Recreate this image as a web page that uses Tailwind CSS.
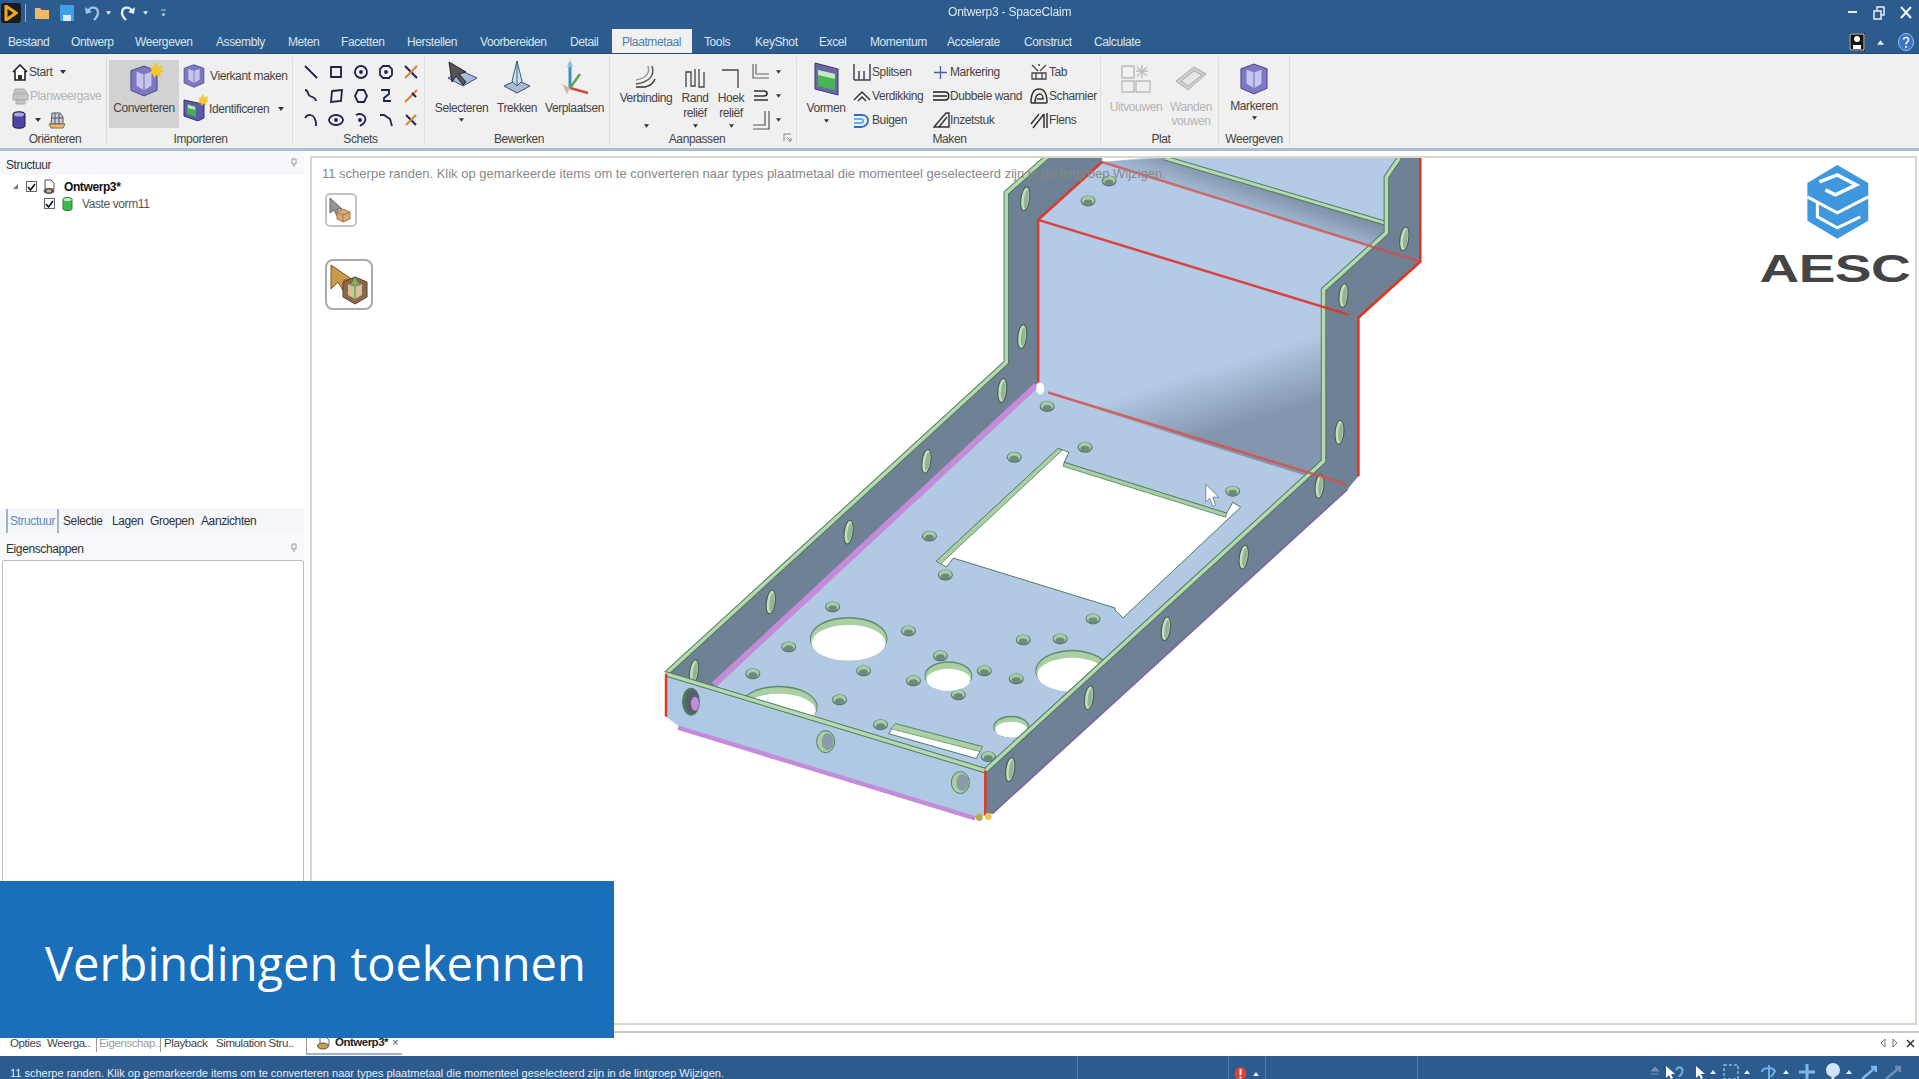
<!DOCTYPE html>
<html lang="nl">

<head>
    <meta charset="UTF-8">
    <title>Ontwerp3 - SpaceClaim</title>
    <script src="https://cdn.jsdelivr.net/npm/@tailwindcss/browser@4"></script>
</head>

<body class="bg-white">
    <svg class="hidden">
        <symbol id="caret" viewBox="0 0 6 4"><path d="M0 0h6L3 4z" fill="#333" /></symbol>
        <symbol id="caretw" viewBox="0 0 6 4"><path d="M0 4h6L3 0z" fill="#e8eef5" /></symbol>
        <symbol id="cube" viewBox="0 0 30 34">
            <path d="M15 1 29 6v21l-14 6-14-6V6z" fill="#7d78c4" stroke="#46427f" />
            <path d="M7 7v15l8 5 8-5V7l-8 3z" fill="#c4c6ec" />
            <path d="M15 10v17" stroke="#6c68ad" />
        </symbol>
    </svg>

    <div class="relative w-[1919px] h-[1079px] overflow-hidden flex flex-col font-['Liberation_Sans',Arial,sans-serif] text-[12px] tracking-[-0.4px] text-[#444] blur-[0.4px]">

        <!-- title bar -->
        <div class="h-[26px] bg-[#2b5c8d] flex items-center relative">
            <div class="w-[20px] h-[20px] ml-[1px] bg-[#1b1b1b] rounded-[3px] flex items-center justify-center">
                <svg width="14" height="16" viewBox="0 0 14 16"><path d="M2 1l10 7-10 7z" fill="none" stroke="#f2a81d" stroke-width="3" /></svg>
            </div>
            <div class="w-[1px] h-[18px] bg-[#8fb0cf] ml-[4px]"></div>
            <svg class="ml-[8px]" width="16" height="14" viewBox="0 0 16 14"><path d="M1 2h5l2 2h7v9H1z" fill="#f0b860" /></svg>
            <svg class="ml-[10px]" width="14" height="16" viewBox="0 0 14 16"><path d="M0 0h14v16H0z" fill="#3fa0e8" /><path d="M3 10h8v6H3z" fill="#dceaf6" /></svg>
            <svg class="ml-[11px]" width="15" height="16" viewBox="0 0 15 16"><path d="M3 7C4 1 13 1 13 8c0 3-2 5-4 7" fill="none" stroke="#9cc4ea" stroke-width="2.4" /><path d="M0 2l1 7 6-2z" fill="#9cc4ea" /></svg>
            <svg class="ml-[6px]" width="5" height="4"><use href="#caretw" transform="rotate(180 2.5 2)" /></svg>
            <svg class="ml-[9px]" width="15" height="16" viewBox="0 0 15 16"><path d="M12 7C11 1 2 1 2 8c0 3 2 5 4 7" fill="none" stroke="#e6eef6" stroke-width="2.4" /><path d="M15 2l-1 7-6-2z" fill="#e6eef6" /></svg>
            <svg class="ml-[8px]" width="5" height="4"><use href="#caretw" transform="rotate(180 2.5 2)" /></svg>
            <svg class="ml-[13px]" width="6" height="8"><path d="M0 1h5M1 5h3L2.500 7z" stroke="#b9cde0" fill="#b9cde0" /></svg>
            <span class="absolute left-[948px] top-[5px] text-[#dfe8f1] leading-[14px] tracking-[-0.2px]">Ontwerp3 - SpaceClaim</span>
            <div class="absolute left-[1847px] top-[5px] flex items-center gap-[15px]">
                <svg width="11" height="16" viewBox="0 0 11 16"><path d="M1 7h9" stroke="#e8eef5" stroke-width="2" /></svg>
                <svg width="12" height="16" viewBox="0 0 12 16"><path d="M1 6h7v8H1zM4 6V2h7v8H8" fill="none" stroke="#e8eef5" stroke-width="1.500" /></svg>
                <svg width="12" height="16" viewBox="0 0 12 16"><path d="M1 2l10 11M11 2 1 13" stroke="#f4f7fa" stroke-width="2" /></svg>
            </div>
        </div>

        <!-- menu tabs -->
        <div class="h-[28px] bg-[#2b5c8d] flex items-end pl-[8px] text-[#dbe5ef] relative border-b border-[#214d7a]">
            <span class="w-[63px] h-[24px] leading-[26px]">Bestand</span>
            <span class="w-[64px] h-[24px] leading-[26px]">Ontwerp</span>
            <span class="w-[81px] h-[24px] leading-[26px]">Weergeven</span>
            <span class="w-[72px] h-[24px] leading-[26px]">Assembly</span>
            <span class="w-[53px] h-[24px] leading-[26px]">Meten</span>
            <span class="w-[66px] h-[24px] leading-[26px]">Facetten</span>
            <span class="w-[73px] h-[24px] leading-[26px]">Herstellen</span>
            <span class="w-[90px] h-[24px] leading-[26px]">Voorbereiden</span>
            <span class="w-[42px] h-[24px] leading-[26px]">Detail</span>
            <span class="w-[80px] h-[24px] leading-[26px] pl-[10px] bg-[#f0f0f0] text-[#4f7fae]">Plaatmetaal</span>
            <span class="ml-[12px] w-[51px] h-[24px] leading-[26px]">Tools</span>
            <span class="w-[64px] h-[24px] leading-[26px]">KeyShot</span>
            <span class="w-[51px] h-[24px] leading-[26px]">Excel</span>
            <span class="w-[77px] h-[24px] leading-[26px]">Momentum</span>
            <span class="w-[77px] h-[24px] leading-[26px]">Accelerate</span>
            <span class="w-[70px] h-[24px] leading-[26px]">Construct</span>
            <span class="w-[70px] h-[24px] leading-[26px]">Calculate</span>
            <div class="absolute left-[1849px] top-[7px] flex items-center">
                <svg width="16" height="18" viewBox="0 0 16 18"><path d="M0 0h16v18H0z" fill="#111" /><path d="M1 1h14v16H1z" fill="none" stroke="#cfd8e2" /><circle cx="8" cy="6" r="3" fill="#fff" /><path d="M4 16v-4h8v4z" fill="#fff" /></svg>
                <svg class="ml-[12px]" width="7" height="5"><use href="#caretw" /></svg>
                <svg class="ml-[14px]" width="16" height="18" viewBox="0 0 16 18"><ellipse cx="8" cy="9" rx="7.500" ry="8.500" fill="#3d74c8" stroke="#9cc0ee" /><path d="M5.500 6.500C6 3.500 11 4 10.500 7c-.3 2-2.500 2-2.500 4.500M8 13v2" fill="none" stroke="#fff" stroke-width="1.500" /></svg>
            </div>
        </div>

        <!-- ribbon -->
        <div class="h-[94px] bg-[#f0f0f0] py-[3px] flex whitespace-nowrap">
            <!-- Orienteren -->
            <div class="w-[107px] flex flex-col pt-[3px] border-r border-[#dcdcdc]">
                <div class="h-[72px] pl-[12px]">
                    <div class="h-[24px] flex items-center">
                        <svg width="16" height="17" viewBox="0 0 16 17"><path d="M1 8 8 1l7 7M3 7v9h10V7" fill="#fff" stroke="#222" stroke-width="1.600" /><path d="M6 16v-5h4v5z" fill="#333" /></svg>
                        <span class="ml-[1px]">Start</span>
                        <svg class="ml-[8px]" width="6" height="4"><use href="#caret" /></svg>
                    </div>
                    <div class="h-[24px] flex items-center text-[#b4b4b4]">
                        <svg width="17" height="17" viewBox="0 0 17 17"><path d="M3 1h9l3 4H2zM1 6h15v6H1zM4 12h9v4H4z" fill="#c4c4c4" stroke="#aaa" /></svg>
                        <span class="ml-[1px]">Planweergave</span>
                    </div>
                    <div class="h-[24px] flex items-center">
                        <svg width="14" height="18" viewBox="0 0 14 18"><path d="M1 3c0-3 12-3 12 0v12c0 3-12 3-12 0z" fill="#4a45a8" stroke="#222" /><ellipse cx="7" cy="3.500" rx="5" ry="2" fill="#aaa8e6" /></svg>
                        <svg class="ml-[9px]" width="6" height="4"><use href="#caret" /></svg>
                        <svg class="ml-[7px]" width="18" height="18" viewBox="0 0 18 18"><path d="M4 2h8l3 4v7H3z" fill="#c9cde0" stroke="#555" /><path d="M1 13h16l-2 4H3z" fill="#e3b978" stroke="#8a6a3c" /><path d="M7 2v11M11 3v10M3 7h12" stroke="#555" /></svg>
                    </div>
                </div>
                <div class="h-[12px] leading-[14px] text-center pl-[4px]">Oriënteren</div>
            </div>
            <!-- Importeren -->
            <div class="w-[186px] flex flex-col pt-[3px] border-r border-[#dcdcdc]">
                <div class="h-[72px] flex pl-[2px]">
                    <div class="w-[70px] h-[68px] bg-[#d2d2d2] flex flex-col items-center pt-[4px]">
                        <div class="relative h-[34px]">
                            <svg width="28" height="34"><use href="#cube" /></svg>
                            <svg class="absolute top-[-2px] right-[-6px]" width="16" height="16" viewBox="0 0 16 16"><path d="M8 0l2 5 5-2-2 5 3 1-4 2 1 4-4-2-3 3-1-4-4 0 3-4-3-3 4 0z" fill="#f5c52e" /></svg>
                        </div>
                        <span class="mt-[3px] leading-[14px]">Converteren</span>
                    </div>
                    <div class="ml-[4px] flex flex-col">
                        <div class="h-[32px] flex items-center">
                            <svg width="22" height="24"><use href="#cube" /></svg>
                            <span class="ml-[5px]">Vierkant maken</span>
                        </div>
                        <div class="h-[34px] flex items-center">
                            <div class="relative w-[22px] h-[24px]">
                                <svg width="22" height="24" viewBox="0 0 22 24"><path d="M1 3l14 3 6-2v17l-6 3-14-5z" fill="#5d5aa8" stroke="#33306b" /><path d="M4 7l9 2v11l-9-3z" fill="#45b04e" /><path d="M5 8l7 2v3l-7-2z" fill="#bfe6b8" /></svg>
                                <svg class="absolute top-[-3px] right-[-4px]" width="12" height="12" viewBox="0 0 16 16"><path d="M8 0l2 5 5-2-2 5 3 1-4 2 1 4-4-2-3 3-1-4-4 0 3-4-3-3 4 0z" fill="#f5c52e" /></svg>
                            </div>
                            <span class="ml-[4px]">Identificeren</span>
                            <svg class="ml-[9px]" width="6" height="4"><use href="#caret" /></svg>
                        </div>
                    </div>
                </div>
                <div class="h-[12px] leading-[14px] text-center pl-[2px]">Importeren</div>
            </div>
            <!-- Schets -->
            <div class="w-[132px] flex flex-col pt-[3px] border-r border-[#dcdcdc]">
                <div class="h-[72px] pl-[5px] grid grid-cols-[repeat(5,25px)] grid-rows-[repeat(3,24px)] place-items-center">
                    <svg width="16" height="16" viewBox="0 0 16 16" fill="none" stroke="#1d2350" stroke-width="1.800"><path d="M2 2l12 12" /></svg>
                    <svg width="16" height="16" viewBox="0 0 16 16" fill="none" stroke="#1d2350" stroke-width="1.800"><path d="M3 3h10v10H3z" /></svg>
                    <svg width="16" height="16" viewBox="0 0 16 16" fill="none" stroke="#1d2350" stroke-width="1.800"><circle cx="8" cy="8" r="6" /><circle cx="8" cy="8" r="1" /></svg>
                    <svg width="16" height="16" viewBox="0 0 16 16" fill="none" stroke="#1d2350" stroke-width="1.800"><path d="M5 2h6l3 3v6l-3 3H5l-3-3V5z" /><circle cx="8" cy="8" r="1" /></svg>
                    <svg width="16" height="16" viewBox="0 0 16 16" fill="none" stroke-width="2"><path d="M2 2l12 12" stroke="#1d2350" /><path d="M14 2 2 14" stroke="#d9822b" /></svg>
                    <svg width="16" height="16" viewBox="0 0 16 16" fill="none" stroke="#1d2350" stroke-width="1.800"><path d="M2 2c4 0 2 5 5 6s6 2 6 5" /></svg>
                    <svg width="16" height="16" viewBox="0 0 16 16" fill="none" stroke="#1d2350" stroke-width="1.800"><path d="M4 3l10-1-1 11-10 1z" /></svg>
                    <svg width="16" height="16" viewBox="0 0 16 16" fill="none" stroke="#1d2350" stroke-width="1.800"><path d="M5 2h6l3 6-3 6H5L2 8z" /></svg>
                    <svg width="16" height="16" viewBox="0 0 16 16" fill="none" stroke="#1d2350" stroke-width="1.800"><path d="M3 2h8v4L6 10v3h7" /></svg>
                    <svg width="16" height="16" viewBox="0 0 16 16" fill="none" stroke-width="2"><path d="M14 2 2 14" stroke="#d9822b" /><path d="M9 5l4 4" stroke="#1d2350" /></svg>
                    <svg width="16" height="16" viewBox="0 0 16 16" fill="none" stroke="#1d2350" stroke-width="1.800"><path d="M2 6c3-5 10-4 11 5v3" /></svg>
                    <svg width="16" height="16" viewBox="0 0 16 16" fill="none" stroke="#1d2350" stroke-width="1.800"><ellipse cx="8" cy="8" rx="7" ry="5" /><circle cx="8" cy="8" r="1" /></svg>
                    <svg width="16" height="16" viewBox="0 0 16 16" fill="none" stroke="#1d2350" stroke-width="1.800"><path d="M3 3c6-3 12 2 8 8l-4 3" /><circle cx="7" cy="8" r="1" /></svg>
                    <svg width="16" height="16" viewBox="0 0 16 16" fill="none" stroke="#1d2350" stroke-width="1.800"><path d="M2 3h4l6 4 2 7" /></svg>
                    <svg width="16" height="16" viewBox="0 0 16 16" fill="none" stroke-width="2"><path d="M3 3l10 10" stroke="#1d2350" /><path d="M13 3 3 13" stroke="#d9822b" /></svg>
                </div>
                <div class="h-[12px] leading-[14px] text-center pl-[4px]">Schets</div>
            </div>
            <!-- Bewerken -->
            <div class="w-[185px] flex flex-col pt-[3px] border-r border-[#dcdcdc]">
                <div class="h-[72px] flex pl-[9px]">
                    <div class="w-[55px] flex flex-col items-center">
                        <svg width="32" height="36" viewBox="0 0 32 36"><path d="M2 18l14-7 15 7-14 8z" fill="#a8bcd8" stroke="#33507a" /><path d="M3 2l3 20 4-6 7 9 3-3-7-8 7-2z" fill="#555" stroke="#222" /></svg>
                        <span class="mt-[5px] leading-[14px]">Selecteren</span>
                        <svg class="mt-[3px]" width="5" height="4"><use href="#caret" /></svg>
                    </div>
                    <div class="w-[56px] flex flex-col items-center">
                        <svg width="28" height="36" viewBox="0 0 28 36"><path d="M1 26l13-6 13 6-13 7z" fill="#a8bcd8" stroke="#33507a" /><path d="M14 1l5 20-5 5-5-5z" fill="#cfe2ef" stroke="#33607a" /><path d="M14 1v25" stroke="#33607a" /></svg>
                        <span class="mt-[5px] leading-[14px]">Trekken</span>
                    </div>
                    <div class="w-[59px] flex flex-col items-center">
                        <svg width="30" height="36" viewBox="0 0 30 36" fill="none"><path d="M10 28 10 3" stroke="#3a93b8" stroke-width="3" /><path d="M10 28 28 33" stroke="#d4453a" stroke-width="2.500" /><path d="M10 28 20 14" stroke="#5aa84e" stroke-width="2.500" /><path d="M10 0l3 7H7z" fill="#8fc4d8" /><path d="M2 24l8 4-3 6z" fill="#d8b0a0" /></svg>
                        <span class="mt-[5px] leading-[14px]">Verplaatsen</span>
                    </div>
                </div>
                <div class="h-[12px] leading-[14px] text-center pl-[4px]">Bewerken</div>
            </div>
            <!-- Aanpassen -->
            <div class="w-[187px] relative flex flex-col pt-[3px] border-r border-[#dcdcdc]">
                <div class="h-[72px] flex pl-[8px]">
                    <div class="w-[56px] flex flex-col items-center">
                        <svg class="mt-[5px]" width="22" height="24" viewBox="0 0 22 24" fill="none" stroke="#555" stroke-width="1.500"><path d="M17 1c3 9-2 16-16 18" /><path d="M13 1c2 7-1 12-12 14" stroke="#999" /><path d="M1 22h9c5-1 8-3 10-8" stroke="#333" /></svg>
                        <span class="mt-[2px] leading-[15px]">Verbinding</span>
                        <svg class="mt-[18px]" width="5" height="4"><use href="#caret" /></svg>
                    </div>
                    <div class="w-[42px] flex flex-col items-center">
                        <svg class="mt-[7px]" width="20" height="22" viewBox="0 0 20 22" fill="none" stroke="#444" stroke-width="1.300"><path d="M1 20V5h5v14h4V2h0M14 2v18h5V5" /></svg>
                        <span class="mt-[2px] leading-[15px] text-center">Rand<br>reliëf</span>
                        <svg class="mt-[3px]" width="5" height="4"><use href="#caret" /></svg>
                    </div>
                    <div class="w-[30px] flex flex-col items-center">
                        <svg class="mt-[7px]" width="20" height="22" viewBox="0 0 20 22" fill="none" stroke="#444" stroke-width="1.300"><path d="M1 3h16v18" /></svg>
                        <span class="mt-[2px] leading-[15px] text-center">Hoek<br>reliëf</span>
                        <svg class="mt-[3px]" width="5" height="4"><use href="#caret" /></svg>
                    </div>
                    <div class="ml-[6px] flex flex-col">
                        <div class="h-[24px] flex items-center">
                            <svg width="18" height="18" viewBox="0 0 18 18" fill="none" stroke="#666" stroke-width="1.200"><path d="M1 1v14h16M4 1v10h13" /></svg>
                            <svg class="ml-[6px]" width="5" height="4"><use href="#caret" /></svg>
                        </div>
                        <div class="h-[24px] flex items-center">
                            <svg width="18" height="14" viewBox="0 0 18 14" fill="none" stroke="#333" stroke-width="1.600"><path d="M2 2h10c4 0 4 5 0 5H2M2 11h14" /></svg>
                            <svg class="ml-[6px]" width="5" height="4"><use href="#caret" /></svg>
                        </div>
                        <div class="h-[24px] flex items-center">
                            <svg width="18" height="20" viewBox="0 0 18 20" fill="none" stroke="#555" stroke-width="1.200"><path d="M1 15h12V1M1 19h16V1" /></svg>
                            <svg class="ml-[6px]" width="5" height="4"><use href="#caret" /></svg>
                        </div>
                    </div>
                </div>
                <div class="h-[12px] leading-[14px] text-center pr-[12px]">Aanpassen</div>
                <svg class="absolute left-[173px] top-[76px]" width="9" height="9" viewBox="0 0 9 9" fill="none" stroke="#888"><path d="M1 1h7M1 1v7M4 4l4 4M8 5v3H5" /></svg>
            </div>
            <!-- Maken -->
            <div class="w-[304px] flex flex-col pt-[3px] border-r border-[#dcdcdc]">
                <div class="h-[72px] flex pl-[7px]">
                    <div class="w-[44px] flex flex-col items-center">
                        <svg class="mt-[2px]" width="25" height="34" viewBox="0 0 25 34"><path d="M1 1l23 6v26L1 27z" fill="#6b68a8" stroke="#3a3870" /><path d="M4 8l17 4v16L4 24z" fill="#49b455" /><path d="M4 8l17 4v5L4 13z" fill="#c4eabf" /></svg>
                        <span class="mt-[5px] leading-[14px]">Vormen</span>
                        <svg class="mt-[4px]" width="5" height="4"><use href="#caret" /></svg>
                    </div>
                    <div class="ml-[5px] w-[80px] flex flex-col">
                        <div class="h-[24px] flex items-center">
                            <svg width="18" height="18" viewBox="0 0 18 18" fill="none" stroke="#445" stroke-width="1.500"><path d="M1 17V1M1 17h16V1M6 17V8M11 17V8" /></svg>
                            <span class="ml-[1px]">Splitsen</span>
                        </div>
                        <div class="h-[24px] flex items-center">
                            <svg width="18" height="12" viewBox="0 0 18 12" fill="none" stroke="#334" stroke-width="1.500"><path d="M1 10 9 2l8 8M5 11l4-4 4 4" /></svg>
                            <span class="ml-[1px]">Verdikking</span>
                        </div>
                        <div class="h-[24px] flex items-center">
                            <svg width="18" height="18" viewBox="0 0 18 18" fill="none" stroke-width="1.800"><path d="M1 4h8c8 0 8 10 0 12H1" stroke="#2f6fbf" /><path d="M1 8h7c3 0 3 4 0 4H1" stroke="#6ab0e6" /></svg>
                            <span class="ml-[1px]">Buigen</span>
                        </div>
                    </div>
                    <div class="w-[97px] flex flex-col">
                        <div class="h-[24px] flex items-center">
                            <svg class="ml-[1px]" width="13" height="13" viewBox="0 0 13 13" stroke="#4a5fa8" stroke-width="1.300"><path d="M6.500 0v13M0 6.500h13" /></svg>
                            <span class="ml-[3px]">Markering</span>
                        </div>
                        <div class="h-[24px] flex items-center">
                            <svg width="17" height="10" viewBox="0 0 17 10" fill="none" stroke="#222" stroke-width="1.500"><path d="M0 1h12c5 0 5 8 0 8H0M0 5h14" /></svg>
                            <span class="ml-[0px]">Dubbele wand</span>
                        </div>
                        <div class="h-[24px] flex items-center">
                            <svg width="17" height="18" viewBox="0 0 17 18" fill="none" stroke="#333" stroke-width="1.400"><path d="M1 16 13 2h3v14zM6 16l8-10" /></svg>
                            <span class="ml-[0px]">Inzetstuk</span>
                        </div>
                    </div>
                    <div class="flex flex-col">
                        <div class="h-[24px] flex items-center">
                            <svg width="18" height="18" viewBox="0 0 18 18" fill="none" stroke="#444" stroke-width="1.300"><path d="M2 2l6 6M16 2l-6 6M8 2h2M2 10h14v6H2zM6 10v6M12 10v6" /></svg>
                            <span class="ml-[1px]">Tab</span>
                        </div>
                        <div class="h-[24px] flex items-center">
                            <svg width="18" height="16" viewBox="0 0 18 16" fill="none" stroke="#333" stroke-width="1.500"><path d="M1 15c0-9 3-14 8-14s8 5 8 14M5 15c0-6 2-9 5-9 2 0 3 3 3 5H7M1 15h16" /></svg>
                            <span class="ml-[1px]">Scharnier</span>
                        </div>
                        <div class="h-[24px] flex items-center">
                            <svg width="18" height="18" viewBox="0 0 18 18" fill="none" stroke="#333" stroke-width="1.500"><path d="M1 13 9 3M3 17 14 3M14 3v14M17 2v15" /></svg>
                            <span class="ml-[1px]">Flens</span>
                        </div>
                    </div>
                </div>
                <div class="h-[12px] leading-[14px] text-center pl-[2px]">Maken</div>
            </div>
            <!-- Plat -->
            <div class="w-[118px] flex flex-col pt-[3px] border-r border-[#dcdcdc]">
                <div class="h-[72px] flex pl-[7px] text-[#b4b4b4]">
                    <div class="w-[56px] flex flex-col items-center">
                        <svg class="mt-[4px]" width="32" height="30" viewBox="0 0 32 30" fill="none" stroke="#bbb" stroke-width="1.400"><path d="M2 2h12v12H2zM2 17h12v11H2zM16 17h14v11H16z" /><path d="M22 1v13M17 3l10 9M27 3 17 12M16 7h12" /></svg>
                        <span class="mt-[6px] leading-[14px]">Uitvouwen</span>
                    </div>
                    <div class="w-[54px] flex flex-col items-center">
                        <svg class="mt-[4px]" width="32" height="30" viewBox="0 0 32 30"><path d="M1 17 19 3l12 7-18 16z" fill="#d0d0d0" stroke="#aaa" /><path d="M6 17 19 7l8 4-14 11z" fill="#e6e6e6" stroke="#aaa" /></svg>
                        <span class="mt-[6px] leading-[14px] text-center">Wanden<br>vouwen</span>
                    </div>
                </div>
                <div class="h-[12px] leading-[14px] text-center pl-[3px]">Plat</div>
            </div>
            <!-- Weergeven -->
            <div class="w-[71px] flex flex-col pt-[3px] border-r border-[#dcdcdc]">
                <div class="h-[72px] flex flex-col items-center">
                    <svg class="mt-[2px]" width="28" height="34"><use href="#cube" /></svg>
                    <span class="mt-[3px] leading-[14px]">Markeren</span>
                    <svg class="mt-[3px]" width="5" height="4"><use href="#caret" /></svg>
                </div>
                <div class="h-[12px] leading-[14px] text-center">Weergeven</div>
            </div>
        </div>
        <div class="h-[3px] bg-[#aebfd1]"></div>

        <!-- main -->
        <div class="h-[880px] flex bg-white">
            <!-- left panels -->
            <div class="w-[310px] flex flex-col">
                <div class="h-[357px]">
                    <div class="h-[24px] mr-[6px] pl-[6px] bg-[#f5f7fb] relative flex items-center text-[#333] pt-[3px]">
                        Structuur
                        <svg class="absolute right-[7px] top-[7px]" width="6" height="9" viewBox="0 0 6 9" fill="none" stroke="#999"><path d="M1 1h4v5H1zM3 6v3" /></svg>
                    </div>
                    <div class="mt-[3px] flex items-center h-[17px] pl-[12px]">
                        <svg width="7" height="7" viewBox="0 0 7 7"><path d="M6 1v5H1z" fill="#777" /></svg>
                        <div class="ml-[7px] w-[11px] h-[11px] border border-[#666] bg-white flex items-center justify-center">
                            <svg width="9" height="8" viewBox="0 0 9 8" fill="none" stroke="#111" stroke-width="1.600"><path d="M1 4l2.500 3L8 1" /></svg>
                        </div>
                        <svg class="ml-[6px]" width="13" height="16" viewBox="0 0 13 16"><path d="M2 1h6l3 3v6H2z" fill="#fff" stroke="#555" /><ellipse cx="6" cy="12" rx="5.500" ry="3" fill="#555" /><ellipse cx="6" cy="12" rx="2.500" ry="1.500" fill="#d8b87c" /></svg>
                        <span class="ml-[8px] font-bold text-[#111]">Ontwerp3*</span>
                    </div>
                    <div class="flex items-center h-[17px] pl-[44px]">
                        <div class="w-[11px] h-[11px] border border-[#666] bg-white flex items-center justify-center">
                            <svg width="9" height="8" viewBox="0 0 9 8" fill="none" stroke="#111" stroke-width="1.600"><path d="M1 4l2.500 3L8 1" /></svg>
                        </div>
                        <svg class="ml-[7px]" width="11" height="14" viewBox="0 0 11 14"><path d="M1 2c0-2 9-2 9 0v10c0 2-9 2-9 0z" fill="#3db84e" stroke="#2b7d38" /><ellipse cx="5.500" cy="2.500" rx="4" ry="1.500" fill="#bdeec2" /></svg>
                        <span class="ml-[9px] text-[#555]">Vaste vorm11</span>
                    </div>
                </div>
                <div class="h-[26px] mr-[6px] pl-[6px] bg-[#f4f6fa] flex items-center text-[#333]">
                    <span class="w-[53px] h-[24px] leading-[24px] text-center text-[#5d8cbc] border-x-2 border-[#9db4cb] mr-[4px]">Structuur</span>
                    <span class="w-[49px]">Selectie</span>
                    <span class="w-[38px]">Lagen</span>
                    <span class="w-[51px]">Groepen</span>
                    <span>Aanzichten</span>
                </div>
                <div class="h-[26px] mr-[6px] pl-[6px] bg-[#f8f9fc] relative flex items-end pb-[2px] text-[#333]">
                    Eigenschappen
                    <svg class="absolute right-[7px] top-[9px]" width="6" height="9" viewBox="0 0 6 9" fill="none" stroke="#999"><path d="M1 1h4v5H1zM3 6v3" /></svg>
                </div>
                <div class="flex-1 ml-[2px] mr-[6px] border border-[#bdbdbd] rounded-t-[2px]"></div>
            </div>

            <!-- viewport -->
            <div class="relative flex-1 mt-[5px] mb-[6px] mr-[2px] border-2 border-[#d8d8cc] overflow-hidden">
                <svg class="absolute inset-0 w-full h-full" viewBox="312 158 1603 867">
                    <defs>
                        <linearGradient id="backwall" gradientUnits="userSpaceOnUse" x1="1178" y1="378" x2="1197" y2="439">
                            <stop offset="0" stop-color="#b3cbe6" />
                            <stop offset="1" stop-color="#8396ad" />
                        </linearGradient>
                        <linearGradient id="flange" gradientUnits="userSpaceOnUse" x1="1275" y1="190" x2="1262" y2="228">
                            <stop offset="0" stop-color="#7f91a8" />
                            <stop offset="1" stop-color="#b3cbe6" />
                        </linearGradient>
                        <g id="h"><ellipse rx="7.500" ry="5.500" fill="#547a66" /><ellipse cy="-0.500" rx="6.500" ry="4.500" fill="#a7cfa4" /><ellipse cy="1.500" rx="4.500" ry="3" fill="#6d8a80" /></g>
                        <g id="w"><ellipse rx="5" ry="12.500" fill="#40604f" /><ellipse rx="3.800" ry="11.500" fill="#c3e0bb" /><ellipse cx="1" rx="2.200" ry="9.500" fill="#93b497" /></g>
                    </defs>

                    <!-- floor and back -->
                    <path d="M1038 383 1349 488 985 775 665 675z" fill="#b1c9e3" />
                    <path d="M1038 220 1349 315V490L1038 392z" fill="url(#backwall)" />
                    <path d="M1102 162 1165 156 1400 156 1421 262 1349 315 1038 220z" fill="#b3cbe6" />
                    <path d="M1165 158 1385 223 1421 262 1102 162z" fill="url(#flange)" />
                    <path d="M1165 158 1385 223" stroke="#4f7a62" stroke-width="5" />
                    <path d="M1165 158 1385 223" stroke="#b6d9ae" stroke-width="3" />

                    <!-- holes in the floor -->
                    <use href="#h" x="1088" y="201" /><use href="#h" x="1109" y="181" />
                    <use href="#h" x="1047" y="407" /><use href="#h" x="1014" y="458" /><use href="#h" x="1085" y="448" /><use href="#h" x="1233" y="492" />
                    <use href="#h" x="929" y="537" /><use href="#h" x="945" y="576" /><use href="#h" x="832" y="608" /><use href="#h" x="908" y="632" />
                    <use href="#h" x="788" y="648" /><use href="#h" x="752" y="675" /><use href="#h" x="863" y="672" /><use href="#h" x="839" y="701" />
                    <use href="#h" x="1093" y="620" /><use href="#h" x="1023" y="641" /><use href="#h" x="1060" y="640" /><use href="#h" x="940" y="657" />
                    <use href="#h" x="984" y="672" /><use href="#h" x="1016" y="680" /><use href="#h" x="913" y="682" /><use href="#h" x="958" y="696" />
                    <use href="#h" x="880" y="726" /><use href="#h" x="988" y="758" />

                    <!-- big holes -->
                    <ellipse cx="848" cy="640" rx="39" ry="22" fill="#5c8a6e" /><ellipse cx="848" cy="640.500" rx="38" ry="21" fill="#a9cfa3" /><ellipse cx="848" cy="644" rx="37" ry="18" fill="#fff" />
                    <ellipse cx="948" cy="677" rx="24" ry="14.500" fill="#5c8a6e" /><ellipse cx="948" cy="677.500" rx="23" ry="13.500" fill="#a9cfa3" /><ellipse cx="948" cy="681" rx="22" ry="11" fill="#fff" />
                    <ellipse cx="1072" cy="672" rx="37" ry="21" fill="#5c8a6e" /><ellipse cx="1072" cy="672.500" rx="36" ry="20" fill="#a9cfa3" /><ellipse cx="1072" cy="676" rx="35" ry="17" fill="#fff" />
                    <ellipse cx="778" cy="708" rx="39" ry="21" fill="#5c8a6e" /><ellipse cx="778" cy="708.500" rx="38" ry="20" fill="#a9cfa3" /><ellipse cx="778" cy="712" rx="37" ry="17" fill="#fff" />
                    <ellipse cx="1011" cy="728" rx="18" ry="11" fill="#5c8a6e" /><ellipse cx="1011" cy="728.500" rx="17" ry="10" fill="#a9cfa3" /><ellipse cx="1011" cy="731" rx="16" ry="8" fill="#fff" />
                    <path d="M895 725 982 748 976 760 888 735z" fill="#fff" stroke="#4f7a62" />
                    <path d="M895 725 982 748 980 753 890 730z" fill="#a9cfa3" stroke="#4f7a62" stroke-width="0.600" />

                    <!-- window cutout -->
                    <path d="M1058 449 1069 453 1064 463 1227 514 1233 503 1241 508 1123 619 1115 611 1115 609 953 559 946 568 936 562z" fill="#fff" stroke="#4f7a62" />
                    <path d="M1058 449 1062 451 940 565 936 562z" fill="#a9cfa3" stroke="#4f7a62" stroke-width="0.800" />
                    <path d="M1064 463 1227 514 1226 518 1063 467z" fill="#a9cfa3" stroke="#4f7a62" stroke-width="0.800" />

                    <!-- right wall -->
                    <path d="M985 772 1324 462V290L1387 233V177L1400 158H1421V262L1359 318V477L1348 490 992 815 985 817z" fill="#6e8195" />
                    <path d="M985 772 1324 462V290L1387 233V177L1400 158" fill="none" stroke="#4f7a62" stroke-width="5.500" stroke-linejoin="round" />
                    <path d="M985 772 1324 462V290L1387 233V177L1400 158" fill="none" stroke="#b6d9ae" stroke-width="3.500" stroke-linejoin="round" />
                    <path d="M1421 158V262L1359 318V477" fill="none" stroke="#e8301c" stroke-width="2.500" />
                    <path d="M992 815 1348 490" stroke="#7d6a9e" stroke-width="2" />
                    <use href="#w" transform="translate(1405 239) rotate(8)" /><use href="#w" transform="translate(1344 296) rotate(6)" /><use href="#w" transform="translate(1340 433) rotate(5)" />
                    <use href="#w" transform="translate(1320 487) rotate(6)" /><use href="#w" transform="translate(1244 558) rotate(8)" /><use href="#w" transform="translate(1166 630) rotate(8)" />
                    <use href="#w" transform="translate(1089 699) rotate(8)" /><use href="#w" transform="translate(1010 771) rotate(8)" />

                    <!-- left wall -->
                    <path d="M665 675 1006 363V193L1048 158H1102V162L1038 220V383L713 690z" fill="#6e8195" />
                    <path d="M665 675 1006 363V193L1048 156" fill="none" stroke="#4f7a62" stroke-width="5.500" stroke-linejoin="round" />
                    <path d="M665 675 1006 363V193L1048 156" fill="none" stroke="#b6d9ae" stroke-width="3.500" stroke-linejoin="round" />
                    <path d="M1102 162 1038 220V383" fill="none" stroke="#dc3a2c" stroke-width="2.500" />
                    <path d="M1036 386 713 686" stroke="#c48bd8" stroke-width="6" />
                    <use href="#w" transform="translate(1025 199) rotate(8)" /><use href="#w" transform="translate(1022 337) rotate(6)" /><use href="#w" transform="translate(1002 391) rotate(6)" />
                    <use href="#w" transform="translate(926 462) rotate(8)" /><use href="#w" transform="translate(848 533) rotate(8)" /><use href="#w" transform="translate(770 603) rotate(8)" />
                    <use href="#w" transform="translate(693 673) rotate(8)" />

                    <!-- front wall -->
                    <path d="M665 675 985 772V817L975 819 677 727 665 718z" fill="#afc8e3" />
                    <path d="M665 675 985 772" stroke="#4f7a62" stroke-width="5.500" />
                    <path d="M665 675 985 772" stroke="#b6d9ae" stroke-width="3.500" />
                    <path d="M665 675V718M985 772V817" stroke="#e33a24" stroke-width="2.500" />
                    <path d="M677 729 975 820" stroke="#c48bd8" stroke-width="4.500" />
                    <ellipse cx="690" cy="703" rx="9" ry="14" fill="#4f7a62" /><ellipse cx="691" cy="703" rx="7" ry="12" fill="#56606c" /><ellipse cx="694" cy="705" rx="4" ry="7" fill="#c48bd8" />
                    <ellipse cx="825" cy="743" rx="9" ry="11" fill="#a9cfa3" stroke="#4f7a62" /><ellipse cx="827" cy="743" rx="6" ry="8.500" fill="#8c9aa8" />
                    <ellipse cx="960" cy="784" rx="9" ry="11" fill="#a9cfa3" stroke="#4f7a62" /><ellipse cx="962" cy="784" rx="6" ry="8.500" fill="#8c9aa8" />
                    <circle cx="979" cy="819" r="3.500" fill="#b6b04a" /><circle cx="988" cy="818" r="3.500" fill="#e8c85a" />

                    <!-- red bend lines over everything -->
                    <path d="M1038 220 1349 315" stroke="#e0332a" stroke-width="2.500" opacity="0.9" />
                    <path d="M1102 162 1421 262" stroke="#d94a45" stroke-width="2.500" opacity="0.75" />
                    <path d="M1048 393 1347 485" stroke="#d8504a" stroke-width="2.500" opacity="0.85" />
                    <ellipse cx="1040" cy="389" rx="4" ry="6" fill="#fff" />

                    <!-- mouse pointer -->
                    <path d="M1206 485V503L1210 499 1213 507 1216 506 1213 498 1219 498z" fill="#fff" stroke="#6f7f8f" stroke-width="0.900" />

                    <!-- logo -->
                    <path d="M1839 165 1870 183V221L1839 239 1809 221V183z" fill="#3f97dd" />
                    <path d="M1821 182 1839 175 1858 185 1837 195 1827 190" fill="none" stroke="#fff" stroke-width="3.500" />
                    <path d="M1809 197 1839 213 1870 197" fill="none" stroke="#fff" stroke-width="3" />
                    <path d="M1819 203V217L1839 228 1862 217" fill="none" stroke="#fff" stroke-width="3" />
                    <text x="1761" y="282" textLength="151" lengthAdjust="spacingAndGlyphs" font-family="'Liberation Sans', Arial, sans-serif" font-weight="700" font-size="39" fill="#444">AESC</text>
                </svg>

                <div class="relative pl-[10px] pt-[8px] text-[13px] leading-[16px] text-[#888] tracking-normal whitespace-nowrap">11 scherpe randen. Klik op gemarkeerde items om te converteren naar types plaatmetaal die momenteel geselecteerd zijn in de lintgroep Wijzigen.</div>

                <div class="absolute left-[13px] top-[35px] w-[32px] h-[34px] border-2 border-[#c4c4c4] rounded-[5px] bg-white flex items-center justify-center">
                    <svg width="26" height="26" viewBox="0 0 26 26"><path d="M2 1v15l4-3 3 6 3-1-3-6h5z" fill="#8f939a" stroke="#666" /><path d="M15 12l7 3v7l-7 3-6-3v-7z" fill="#d9a878" stroke="#a8794c" /><path d="M9 15l6 3 7-3M15 18v7" fill="none" stroke="#a8794c" /></svg>
                </div>
                <div class="absolute left-[13px] top-[101px] w-[48px] h-[51px] border-2 border-[#aaa] rounded-[8px] bg-white flex items-center justify-center">
                    <svg width="40" height="42" viewBox="0 0 40 42"><path d="M2 1v24l7-7 7 12 5-3-6-11h9z" fill="#c99a4c" stroke="#7a5a24" /><path d="M26 13l12 5v15l-12 7-12-7V18z" fill="#8a6a4a" stroke="#5a4028" /><path d="M19 20l7 3 7-3v11l-7 4-7-4z" fill="#d8c098" /><path d="M26 14v21M22 22l4-6 4 6" fill="none" stroke="#7cb36a" stroke-width="2" /></svg>
                </div>
            </div>
        </div>

        <!-- document tabs -->
        <div class="h-[25px] bg-white border-t-2 border-[#c8c8c8] flex items-start pt-[2px] text-[11.500px] text-[#444] pl-[10px] relative whitespace-nowrap">
            <span class="w-[37px]">Opties</span>
            <span class="w-[49px]">Weerga..</span>
            <span class="w-[65px] pl-[2px] border-x border-[#999] text-[#9a9a9a]">Eigenschap..</span>
            <span class="ml-[3px] w-[52px]">Playback</span>
            <span class="w-[90px]">Simulation Stru..</span>
            <div class="w-[96px] h-[22px] -mt-[2px] border-l border-[#999] border-b-2 border-b-[#9db4cb] pl-[10px] flex items-center gap-[4px]">
                <svg width="14" height="14" viewBox="0 0 14 14"><path d="M3 1h6l3 3v5H3z" fill="#fff" stroke="#666" /><ellipse cx="6" cy="10" rx="5.500" ry="3" fill="#c8a040" stroke="#555" /></svg>
                <span class="font-bold text-[#222] tracking-[-0.5px]">Ontwerp3*</span>
                <span class="text-[#555]">×</span>
            </div>
            <div class="absolute left-[1880px] top-[5px] flex items-center gap-[6px]">
                <svg width="6" height="10" viewBox="0 0 6 10" fill="none" stroke="#777"><path d="M5 1 1 5l4 4z" /></svg>
                <svg width="6" height="10" viewBox="0 0 6 10" fill="none" stroke="#777"><path d="M1 1l4 4-4 4z" /></svg>
                <svg class="ml-[2px]" width="9" height="9" viewBox="0 0 9 9" stroke="#333" stroke-width="1.500"><path d="M1 1l7 7M8 1 1 8" /></svg>
            </div>
        </div>

        <!-- status bar -->
        <div class="h-[23px] bg-[#2b5c8d] relative flex items-start pl-[10px] pt-[11px] text-[11px] leading-[13px] text-[#e8eef5] tracking-normal whitespace-nowrap">
            11 scherpe randen. Klik op gemarkeerde items om te converteren naar types plaatmetaal die momenteel geselecteerd zijn in de lintgroep Wijzigen.
            <div class="absolute left-[1077px] top-0 w-[1px] h-[23px] bg-[#4f7ba8]"></div>
            <div class="absolute left-[1228px] top-0 w-[1px] h-[23px] bg-[#4f7ba8]"></div>
            <div class="absolute left-[1265px] top-0 w-[1px] h-[23px] bg-[#4f7ba8]"></div>
            <div class="absolute left-[1417px] top-0 w-[1px] h-[23px] bg-[#4f7ba8]"></div>
            <div class="absolute left-[1234px] top-[11px] flex items-center gap-[6px]">
                <svg width="13" height="13" viewBox="0 0 13 13"><ellipse cx="6.500" cy="6.500" rx="6" ry="6.500" fill="#e0403a" /><path d="M6.500 2v6M6.500 9.500v2" stroke="#fff" stroke-width="1.800" /></svg>
                <svg width="6" height="4"><use href="#caretw" /></svg>
            </div>
            <div class="absolute left-[1650px] top-[7px] flex items-center gap-[5px]">
                <svg width="10" height="14" viewBox="0 0 10 14"><path d="M1 6l4-4 4 4zM1 9h8" fill="#6f8fb0" stroke="#6f8fb0" /></svg>
                <svg width="20" height="16" viewBox="0 0 20 16"><path d="M1 2v12l3-3 2 4 2-1-2-4h4z" fill="#fff" /><path d="M11 6c3-5 8-2 6 3l-3 4" fill="none" stroke="#6eb2ee" stroke-width="2" /></svg>
                <svg class="ml-[5px]" width="10" height="16" viewBox="0 0 10 16"><path d="M1 2v12l3-3 2 4 2-1-2-4h4z" fill="#fff" /></svg>
                <svg width="6" height="4"><use href="#caretw" /></svg>
                <svg class="ml-[2px]" width="16" height="16" viewBox="0 0 16 16" fill="none" stroke="#8ab8e4" stroke-width="1.500" stroke-dasharray="3 2"><path d="M1 1h14v14H1z" /></svg>
                <svg width="6" height="4"><use href="#caretw" /></svg>
                <svg class="ml-[5px]" width="18" height="16" viewBox="0 0 18 16" fill="none" stroke="#6eb2ee" stroke-width="2"><path d="M9 1v14M2 8c0-4 10-6 13-1l-4 6" /></svg>
                <svg width="6" height="4"><use href="#caretw" /></svg>
                <svg class="ml-[5px]" width="16" height="16" viewBox="0 0 16 16" stroke="#7ab8ee" stroke-width="3"><path d="M8 0v16M0 8h16" /></svg>
                <svg class="ml-[5px]" width="16" height="18" viewBox="0 0 16 18"><circle cx="8" cy="7" r="7" fill="#cfe6fa" /><path d="M8 13v5" stroke="#cfe6fa" stroke-width="3" /></svg>
                <svg width="6" height="4"><use href="#caretw" /></svg>
                <svg class="ml-[4px]" width="16" height="16" viewBox="0 0 16 16" fill="none" stroke="#7ab8ee" stroke-width="2.500"><path d="M1 15 15 3M10 3h5v5" /></svg>
                <svg class="ml-[3px]" width="16" height="16" viewBox="0 0 16 16" fill="none" stroke="#6f8fb0" stroke-width="2.500"><path d="M1 15 15 3M10 3h5v5" /></svg>
            </div>
        </div>

        <!-- video caption -->
        <div class="absolute left-0 top-[881px] w-[614px] h-[157px] bg-[#1a6fba] flex items-center pl-[45px] pt-[7px] font-['Open_Sans',sans-serif] text-[47px] font-normal tracking-normal text-white whitespace-nowrap">Verbindingen toekennen</div>
    </div>
</body>

</html>
